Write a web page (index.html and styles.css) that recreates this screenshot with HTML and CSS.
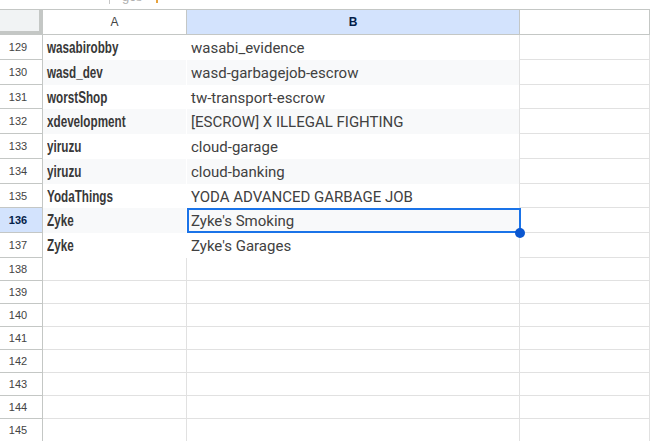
FILE: index.html
```html
<!DOCTYPE html>
<html lang="en">
<head>
  <meta charset="UTF-8">
  <title>Sheet</title>
  <link rel="stylesheet" href="styles.css">
</head>
<body>
  <div class="topbar">
    <span class="sep"></span>
    <span class="formula">gcs</span>
    <span class="mark"></span>
  </div>
  <div class="sheet">
    <div class="corner"></div>
    <div class="col-head">A</div>
    <div class="col-head active">B</div>
    <div class="col-head"></div>

    <div class="row-head">129</div>
    <div class="cell a"><span>wasabirobby</span></div>
    <div class="cell b">wasabi_evidence</div>
    <div class="cell c"></div>

    <div class="row-head">130</div>
    <div class="cell a band"><span>wasd_dev</span></div>
    <div class="cell b band">wasd-garbagejob-escrow</div>
    <div class="cell c"></div>

    <div class="row-head">131</div>
    <div class="cell a"><span>worstShop</span></div>
    <div class="cell b">tw-transport-escrow</div>
    <div class="cell c"></div>

    <div class="row-head">132</div>
    <div class="cell a band"><span>xdevelopment</span></div>
    <div class="cell b band">[ESCROW] X ILLEGAL FIGHTING</div>
    <div class="cell c"></div>

    <div class="row-head">133</div>
    <div class="cell a"><span>yiruzu</span></div>
    <div class="cell b">cloud-garage</div>
    <div class="cell c"></div>

    <div class="row-head">134</div>
    <div class="cell a band"><span>yiruzu</span></div>
    <div class="cell b band">cloud-banking</div>
    <div class="cell c"></div>

    <div class="row-head">135</div>
    <div class="cell a"><span>YodaThings</span></div>
    <div class="cell b">YODA ADVANCED GARBAGE JOB</div>
    <div class="cell c"></div>

    <div class="row-head active">136</div>
    <div class="cell a band"><span>Zyke</span></div>
    <div class="cell b band selected">Zyke's Smoking<span class="handle"></span></div>
    <div class="cell c"></div>

    <div class="row-head">137</div>
    <div class="cell a"><span>Zyke</span></div>
    <div class="cell b">Zyke's Garages</div>
    <div class="cell c"></div>

    <div class="row-head">138</div><div class="cell empty"></div><div class="cell empty"></div><div class="cell c"></div>
    <div class="row-head">139</div><div class="cell empty"></div><div class="cell empty"></div><div class="cell c"></div>
    <div class="row-head">140</div><div class="cell empty"></div><div class="cell empty"></div><div class="cell c"></div>
    <div class="row-head">141</div><div class="cell empty"></div><div class="cell empty"></div><div class="cell c"></div>
    <div class="row-head">142</div><div class="cell empty"></div><div class="cell empty"></div><div class="cell c"></div>
    <div class="row-head">143</div><div class="cell empty"></div><div class="cell empty"></div><div class="cell c"></div>
    <div class="row-head">144</div><div class="cell empty"></div><div class="cell empty"></div><div class="cell c"></div>
    <div class="row-head">145</div><div class="cell empty"></div><div class="cell empty"></div><div class="cell c"></div>
  </div>
</body>
</html>
```

FILE: styles.css
```css
:root {
  --line: #c4c7c5;
  --grid: #e1e1e1;
  --band: #f8f9fa;
  --select: #d3e3fd;
  --blue: #1a73e8;
  --text: #3c3c3c;
}

* {
  box-sizing: border-box;
}

body {
  margin: 0;
  width: 650px;
  height: 441px;
  overflow: hidden;
  background: #fff;
  font-family: 'Liberation Sans', Arial, sans-serif;
}

.topbar {
  height: 10px;
  border-bottom: 1px solid var(--line);
  display: flex;
  align-items: flex-start;
  overflow: hidden;
}

.topbar .sep {
  width: 1px;
  height: 4px;
  background: #c7c7c7;
  margin-left: 109px;
}

.topbar .formula {
  margin-left: 12px;
  margin-top: -11px;
  font-size: 13px;
  color: #b0b0b0;
}

.topbar .mark {
  width: 2px;
  height: 3px;
  background: #e8a33d;
  margin-left: 14px;
}

.sheet {
  display: grid;
  grid-template-columns: 43px 144px 333px 1fr;
  grid-template-rows: 25px 25px 25px 24px 25px 25px 25px 24px 25px 25px repeat(8, 23px);
}

.corner {
  background: #f1f3f4;
  border-right: 4px solid var(--line);
  border-bottom: 4px solid var(--line);
}

.col-head {
  display: flex;
  align-items: center;
  justify-content: center;
  font-size: 12px;
  color: #444;
  border-right: 1px solid var(--line);
  border-bottom: 1px solid var(--line);
}

.col-head.active {
  background: var(--select);
  color: #041e49;
  font-weight: bold;
}

.row-head {
  display: flex;
  align-items: center;
  justify-content: center;
  padding-right: 6px;
  font-size: 11px;
  color: #444;
  border-right: 1px solid var(--line);
  border-bottom: 1px solid var(--line);
}

.row-head.active {
  background: var(--select);
  color: #041e49;
  font-weight: bold;
}

.cell {
  display: flex;
  align-items: center;
  padding-left: 4px;
  padding-top: 1px;
  white-space: nowrap;
  color: var(--text);
}

.cell.band {
  background: var(--band);
}

.cell.a {
  border-right: 1px solid #fff;
  font-family: 'Liberation Sans', Arial, sans-serif;
  font-weight: bold;
  font-size: 16px;
  color: #383838;
}

.cell.a span {
  display: inline-block;
  transform: scaleX(0.73);
  transform-origin: left center;
}

.cell.b {
  font-family: Roboto, sans-serif;
  font-size: 15px;
  color: #414141;
}

.cell.c,
.cell.empty {
  border-right: 1px solid var(--grid);
  border-bottom: 1px solid var(--grid);
}

.cell.c {
  border-left: 1px solid var(--grid);
  margin-left: -1px;
}

.cell.selected {
  position: relative;
}

.cell.selected::after {
  content: "";
  position: absolute;
  left: 0;
  top: 0;
  right: -1px;
  bottom: 0;
  border: 2px solid var(--blue);
}

.handle {
  position: absolute;
  right: -5px;
  bottom: -5px;
  width: 10px;
  height: 10px;
  border-radius: 50%;
  background: #0b57d0;
  z-index: 2;
}
```
